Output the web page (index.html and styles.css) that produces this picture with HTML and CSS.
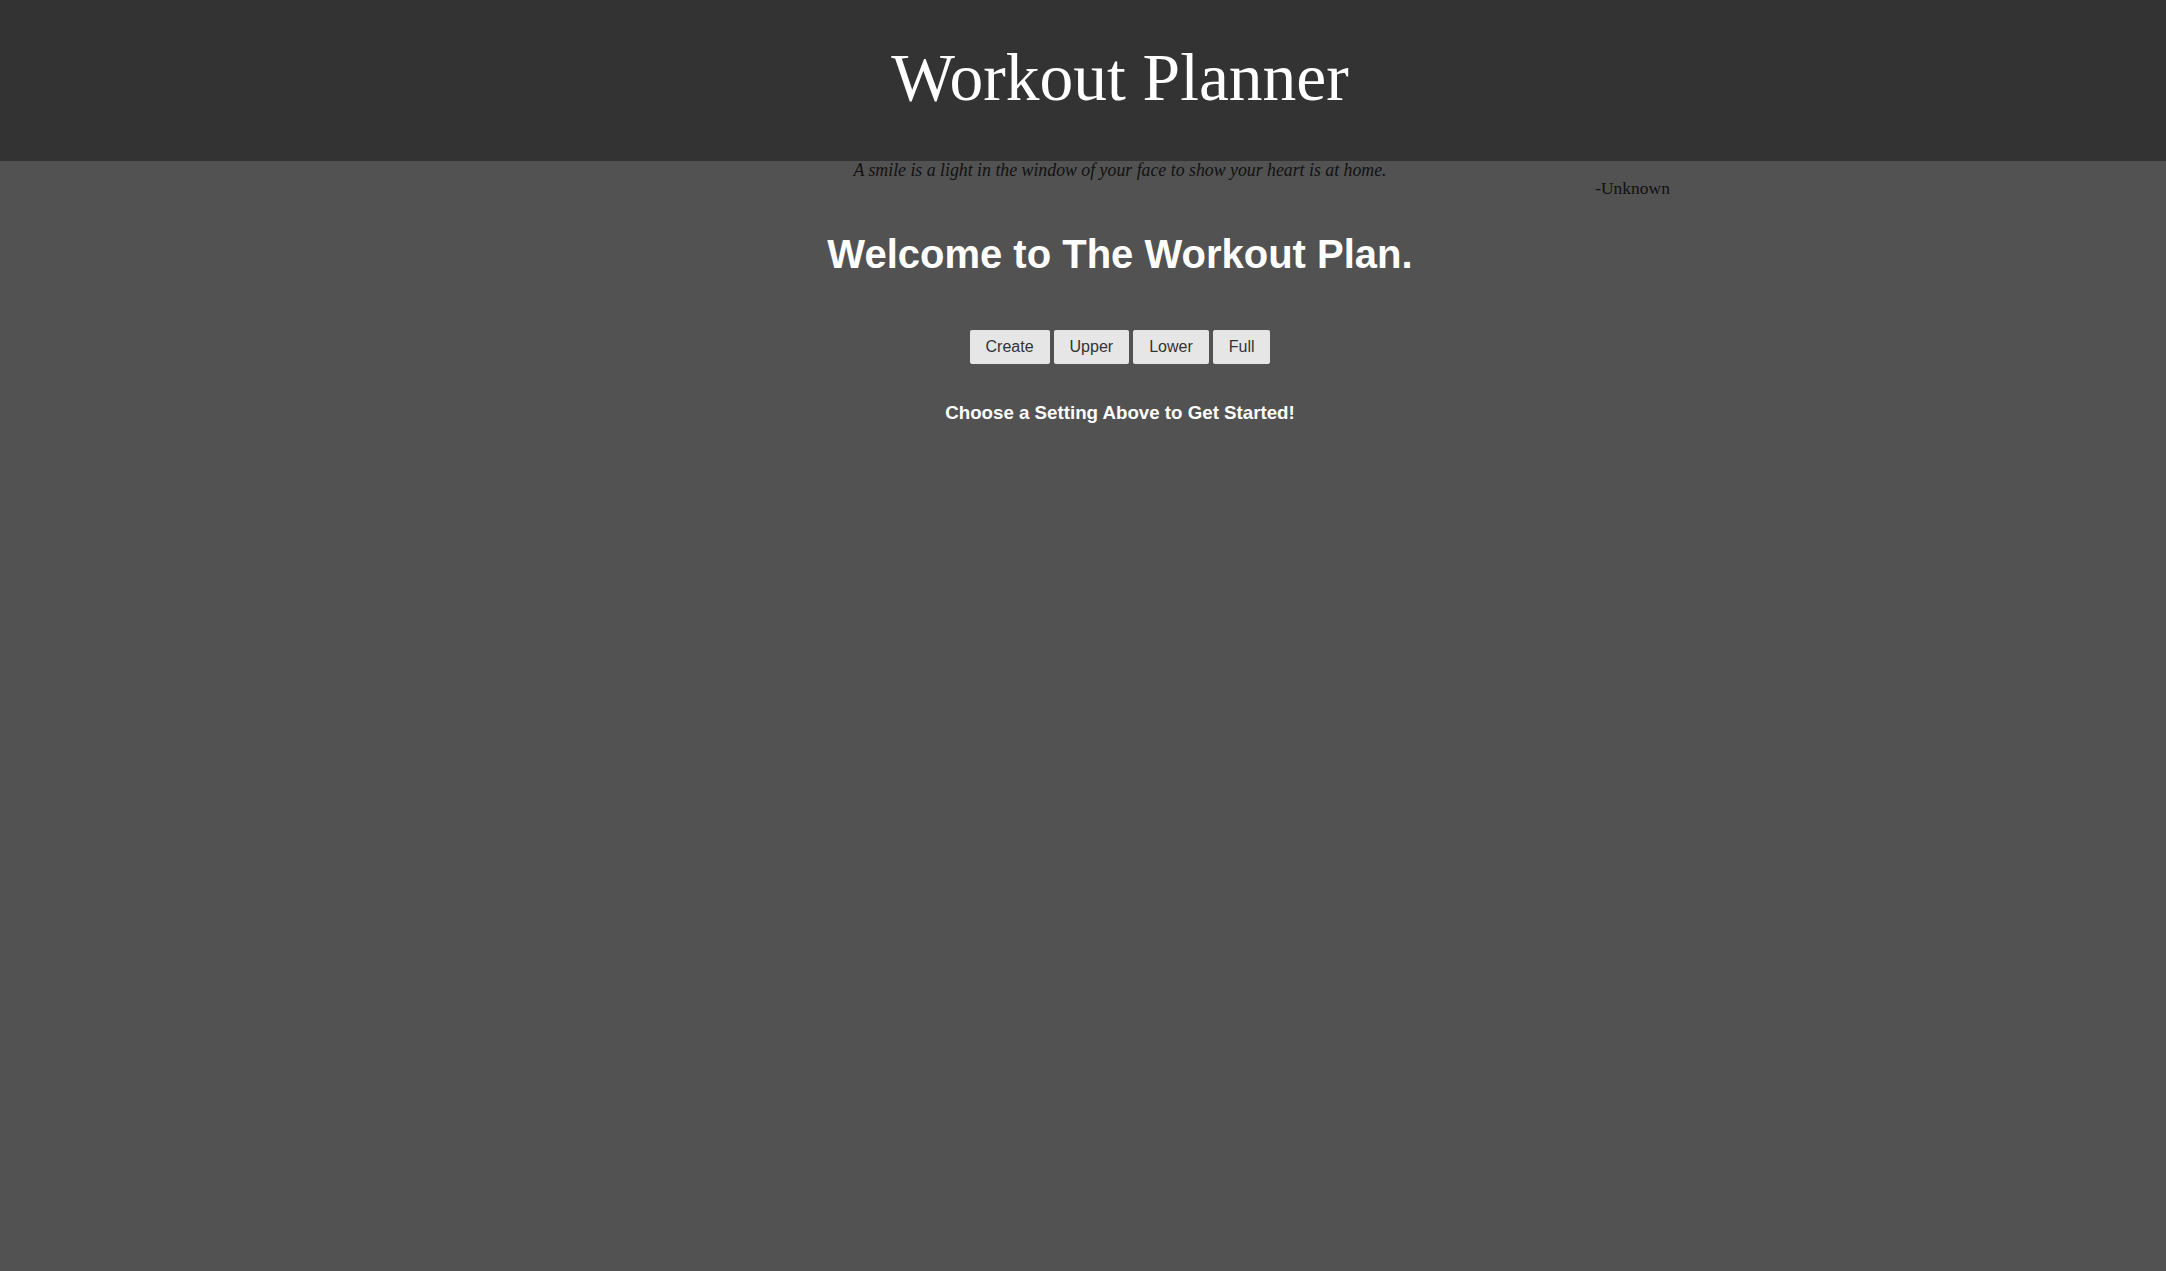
FILE: index.html
```html
<!DOCTYPE html>
<html>
<head>
<meta charset="utf-8">
<title>Workout Planner</title>
<link rel="stylesheet" href="styles.css">
</head>
<body>
<div class="page">
  <header class="site-header">
    <h1 class="site-title">Workout Planner</h1>
  </header>
  <section class="quote">
    <p class="quote-text">A smile is a light in the window of your face to show your heart is at home.</p>
    <p class="quote-author">-Unknown</p>
  </section>
  <main class="main">
    <h2 class="welcome">Welcome to The Workout Plan.</h2>
    <div class="buttons">
      <button class="btn">Create</button>
      <button class="btn">Upper</button>
      <button class="btn">Lower</button>
      <button class="btn">Full</button>
    </div>
    <h3 class="prompt">Choose a Setting Above to Get Started!</h3>
  </main>
</div>
</body>
</html>
```
FILE: styles.css
```css
html, body {
  margin: 0;
  padding: 0;
}
body {
  background: #525252;
  min-height: 1271px;
  font-family: "Liberation Serif", serif;
  overflow: hidden;
}
.page {
  padding-left: 74px;
}
.site-header {
  background: #333333;
  height: 161px;
  margin-left: -74px;
  padding-left: 74px;
  display: flex;
  align-items: center;
  justify-content: center;
}
.site-title {
  margin: 0;
  color: #ffffff;
  font-family: "Liberation Serif", serif;
  font-weight: normal;
  font-size: 67.5px;
  line-height: 1;
  padding-bottom: 6px;
}
.quote {
  width: 1100px;
  margin: 0 auto;
}
.quote-text {
  margin: 0;
  text-align: center;
  font-style: italic;
  font-size: 17.8px;
  line-height: 18px;
  color: #111;
}
.quote-author {
  margin: 0;
  text-align: right;
  font-size: 17.5px;
  line-height: 18px;
  color: #111;
}
.main {
  text-align: center;
  font-family: "Liberation Sans", Arial, sans-serif;
}
.welcome {
  margin: 34px 0 0;
  color: #fff;
  font-size: 40px;
  line-height: 46px;
  font-weight: bold;
}
.buttons {
  margin-top: 53px;
  display: flex;
  justify-content: center;
  gap: 4px;
}
.btn {
  font-family: "Liberation Sans", Arial, sans-serif;
  font-size: 16px;
  line-height: 18px;
  padding: 8px 16px;
  background: #e6e6e6;
  color: #333;
  border: none;
  border-radius: 2px;
}
.prompt {
  margin: 38px 0 0;
  color: #fff;
  font-size: 18.72px;
  line-height: 22px;
  font-weight: bold;
}
```
